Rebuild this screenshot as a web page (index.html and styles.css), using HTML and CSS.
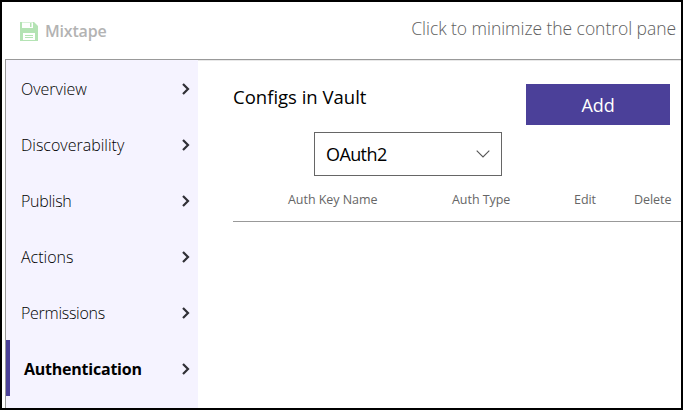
FILE: index.html
```html
<!DOCTYPE html>
<html lang="en">
<head>
<meta charset="utf-8">
<title>Mixtape</title>
<link rel="stylesheet" href="styles.css">
</head>
<body>
<div class="window">
  <header class="topbar">
    <div class="brand">
      <svg class="save" viewBox="0 0 18 19" width="18" height="19"><path fill="#b4e3b4" fill-rule="evenodd" d="M0 0H2V6H13V0H14L18 4V19H0ZM3 11V18H15V11Z"/><path fill="#b4e3b4" d="M10 1h1.5v4H10zM5 13h8v1H5zM5 15h8v1H5zM2 0h11v.6H2z"/></svg>
      <span class="name">Mixtape</span>
    </div>
    <span class="hint">Click to minimize the control pane</span>
  </header>
  <div class="panel">
    <nav class="sidebar">
      <a class="item"><span class="overview">Overview</span><svg class="chev" viewBox="0 0 8 12"><path d="M1 1L6 6L1 11"/></svg></a>
      <a class="item"><span class="discover">Discoverability</span><svg class="chev" viewBox="0 0 8 12"><path d="M1 1L6 6L1 11"/></svg></a>
      <a class="item"><span class="publish">Publish</span><svg class="chev" viewBox="0 0 8 12"><path d="M1 1L6 6L1 11"/></svg></a>
      <a class="item"><span class="actions">Actions</span><svg class="chev" viewBox="0 0 8 12"><path d="M1 1L6 6L1 11"/></svg></a>
      <a class="item"><span class="permissions">Permissions</span><svg class="chev" viewBox="0 0 8 12"><path d="M1 1L6 6L1 11"/></svg></a>
      <a class="item active"><span>Authentication</span><svg class="chev" viewBox="0 0 8 12"><path d="M1 1L6 6L1 11"/></svg></a>
    </nav>
    <main class="content">
      <div class="heading"><h1>Configs in Vault</h1><button class="add">Add</button></div>
      <div class="select"><span>OAuth2</span><svg viewBox="0 0 14 8" width="14" height="8"><path d="M.7.7L7 7L13.3.7"/></svg></div>
      <div class="columns"><span class="key">Auth Key Name</span><span class="type">Auth Type</span><span class="edit">Edit</span><span class="delete">Delete</span></div>
    </main>
  </div>
</div>
</body>
</html>
```
FILE: styles.css
```css
* { box-sizing: border-box; }
body { margin: 0; font-family: "Open Sans", "Noto Sans", sans-serif; color: #000; background: #fff; }
.window { width: 683px; height: 410px; border: 2px solid #000; overflow: hidden; white-space: nowrap; }
.topbar { height: 57px; display: flex; justify-content: space-between; padding: 0 5px 0 18px; }
.brand { display: flex; gap: 7px; }
.save { margin-top: 20px; }
.name { font-size: 16px; line-height: 24px; margin-top: 17px; font-weight: 600; color: #b3b3b3; letter-spacing: -.2px; }
.hint { font-size: 17.5px; line-height: 26px; margin-top: 13px; font-weight: 330; color: #606060; letter-spacing: -.05px; }
.panel { margin-left: 3px; height: 349px; display: flex; border-top: 1px solid #999; border-left: 1px solid #999; box-shadow: inset 0 1px #e8e8e8; }
.sidebar { width: 192px; background: #f5f3ff; padding-top: 1px; }
.item { height: 56px; display: flex; align-items: center; justify-content: space-between; padding: 0 8px 0 15px; font-size: 16px; font-weight: 350; letter-spacing: 0; }
.publish, .permissions { letter-spacing: -.28px; }
.item.active { border-left: 4px solid #4b4099; font-weight: 700; padding: 2px 8px 0 14px; letter-spacing: -.23px; margin-top: -1px; }
.chev { width: 8px; height: 12px; fill: none; stroke: #303036; stroke-width: 2.2; }
.content { flex: 1; min-width: 0; padding: 24px 0 0 35px; }
.heading { display: flex; justify-content: space-between; padding-right: 11px; }
h1 { margin: 0; font-size: 18.5px; line-height: 26px; font-weight: 400; }
.add { width: 144px; height: 41px; border: 0; padding: 0; background: #4b4099; color: #fff; font: 400 18px "Open Sans", sans-serif; letter-spacing: -.1px; }
.select { margin: 7px 0 0 81px; width: 188px; height: 44px; border: 1px solid #666; display: flex; align-items: center; justify-content: space-between; padding: 0 11px; font-size: 18px; letter-spacing: -.6px; }
.select svg { fill: none; stroke: #555; stroke-width: 1.1; }
.columns { height: 46px; border-bottom: 1px solid #999; display: grid; grid-template-columns: 164px 122px 60px 1fr; padding: 14px 0 0 55px; font-size: 12.5px; line-height: 20px; color: #666; letter-spacing: -.05px; }
```
